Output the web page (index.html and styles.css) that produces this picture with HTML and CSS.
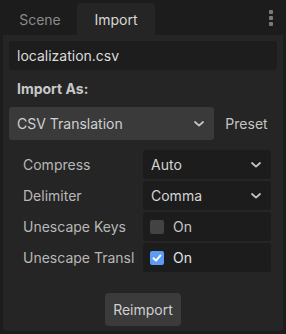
FILE: index.html
```html
<!DOCTYPE html>
<html>
<head>
<meta charset="utf-8">
<link rel="stylesheet" href="styles.css">
</head>
<body>
<div class="dock">
  <div class="tabbar">
    <div class="tab">Scene</div>
    <div class="tab active">Import</div>
    <div class="menu"><span></span><span></span><span></span></div>
  </div>
  <div class="panel">
    <div class="file">localization.csv</div>
    <div class="heading">Import As:</div>
    <div class="typerow">
      <div class="select main">
        <span>CSV Translation</span>
        <svg class="chev" width="10" height="6" viewBox="0 0 10 6"><path d="M1 1 L5 4.6 L9 1" fill="none" stroke="#c4c4c4" stroke-width="1.8" stroke-linecap="round" stroke-linejoin="round"/></svg>
      </div>
      <div class="preset">Preset</div>
    </div>
    <div class="props">
      <div class="prop">
        <div class="label">Compress</div>
        <div class="field select">
          <span>Auto</span>
          <svg class="chev" width="10" height="6" viewBox="0 0 10 6"><path d="M1 1 L5 4.6 L9 1" fill="none" stroke="#c4c4c4" stroke-width="1.8" stroke-linecap="round" stroke-linejoin="round"/></svg>
        </div>
      </div>
      <div class="prop">
        <div class="label">Delimiter</div>
        <div class="field select">
          <span>Comma</span>
          <svg class="chev" width="10" height="6" viewBox="0 0 10 6"><path d="M1 1 L5 4.6 L9 1" fill="none" stroke="#c4c4c4" stroke-width="1.8" stroke-linecap="round" stroke-linejoin="round"/></svg>
        </div>
      </div>
      <div class="prop">
        <div class="label">Unescape Keys</div>
        <div class="field check">
          <span class="box"></span>
          <span>On</span>
        </div>
      </div>
      <div class="prop">
        <div class="label">Unescape Transl</div>
        <div class="field check">
          <span class="box on"><svg width="14" height="14" viewBox="0 0 14 14"><path d="M3.5 7.2 L6 9.6 L10.5 4.4" fill="none" stroke="#fff" stroke-width="1.9" stroke-linecap="round" stroke-linejoin="round"/></svg></span>
          <span class="on-text">On</span>
        </div>
      </div>
    </div>
    <div class="actions">
      <div class="button">Reimport</div>
    </div>
  </div>
</div>
</body>
</html>
```
FILE: styles.css
```css
html, body {
  margin: 0;
  padding: 0;
  background: #1c1c1c;
}
body {
  width: 286px;
  height: 334px;
  font-family: "Inter", "Noto Sans", sans-serif;
  font-size: 14px;
  color: #d4d4d4;
  overflow: hidden;
}
.dock {
  display: flex;
  flex-direction: column;
  padding: 3px 3px 0 3px;
}
.tabbar {
  display: flex;
  align-items: stretch;
  height: 32px;
}
.tab {
  width: 74px;
  display: flex;
  align-items: center;
  justify-content: center;
  color: #8a8a8a;
  box-sizing: border-box;
}
.tab.active {
  width: 78px;
  background: #252525;
  color: #d8d8d8;
  border-radius: 4px 4px 0 0;
}
.menu {
  margin-left: auto;
  width: 14px;
  display: flex;
  flex-direction: column;
  align-items: center;
  gap: 2px;
  padding-top: 7px;
  margin-right: 5px;
}
.menu span {
  width: 4px;
  height: 4px;
  border-radius: 1px;
  background: #7a7a7a;
}
.panel {
  background: #252525;
  height: 296px;
  border-radius: 0 0 4px 4px;
  padding: 6px 6px 0 6px;
  box-sizing: border-box;
  display: flex;
  flex-direction: column;
}
.file {
  height: 29px;
  background: #1d1d1d;
  border-radius: 3px;
  display: flex;
  align-items: center;
  padding-left: 8px;
  color: #dcdcdc;
}
.heading {
  font-weight: 700;
  color: #c8c8c8;
  padding-left: 8px;
  height: 37px;
  display: flex;
  align-items: center;
}
.typerow {
  display: flex;
  align-items: stretch;
  height: 33px;
}
.select {
  display: flex;
  align-items: center;
  justify-content: space-between;
  border-radius: 3px;
}
.select.main {
  width: 205px;
  background: #3a3a3a;
  padding: 0 10px 0 8px;
  box-sizing: border-box;
  color: #d0d0d0;
}
.preset {
  flex: 1;
  display: flex;
  align-items: center;
  justify-content: center;
  color: #c4c4c4;
  padding-left: 2px;
}
.props {
  display: flex;
  flex-direction: column;
  gap: 2px;
  padding: 10px 6px 0 14px;
}
.prop {
  display: flex;
  height: 29px;
  align-items: center;
}
.label {
  width: 120px;
  color: #b8b8b8;
  white-space: nowrap;
  overflow: hidden;
}
.field {
  flex: 1;
  height: 29px;
  background: #1c1c1c;
  border-radius: 3px;
  display: flex;
  align-items: center;
  box-sizing: border-box;
}
.field.select {
  padding: 0 10px 0 8px;
  color: #d4d4d4;
}
.field.check {
  padding-left: 7px;
  gap: 9px;
  color: #c8c8c8;
}
.box {
  width: 14px;
  height: 14px;
  border-radius: 2px;
  background: #434343;
  display: block;
}
.box.on {
  background: #5c9cf2;
}
.box svg {
  display: block;
}
.on-text {
  color: #e4e4e4;
}
.actions {
  display: flex;
  justify-content: center;
  padding-top: 21px;
}
.button {
  width: 76px;
  height: 33px;
  background: #3b3b3b;
  border-radius: 4px;
  display: flex;
  align-items: center;
  justify-content: center;
  color: #cfcfcf;
}
```
